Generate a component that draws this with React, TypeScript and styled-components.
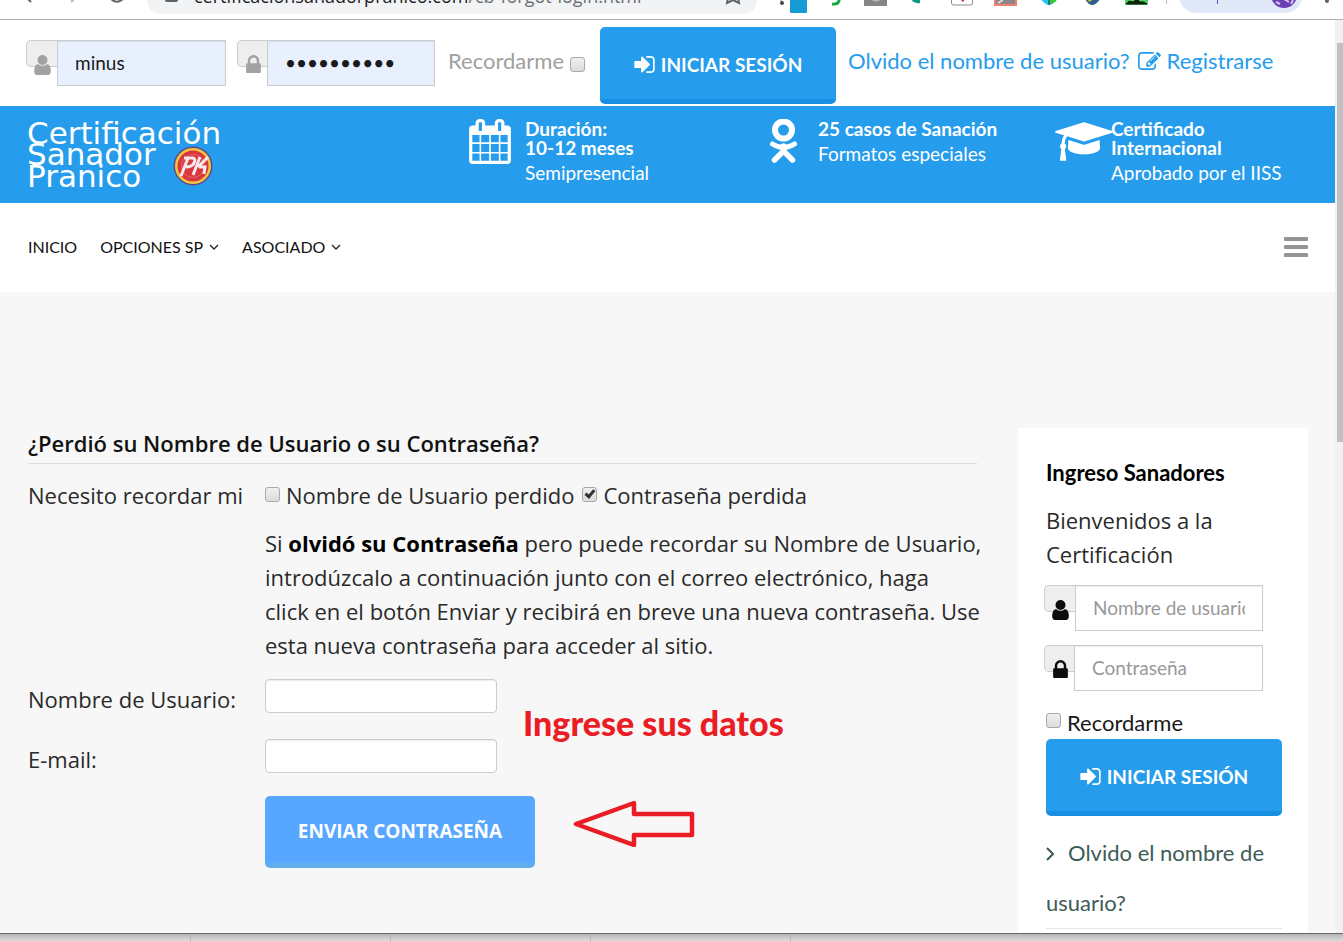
import React from 'react';
import styled, { createGlobalStyle, css } from 'styled-components';

const BLUE = '#259cec';
const LATO = `Lato, "Liberation Sans", sans-serif`;
const SANS = `"Open Sans", "Noto Sans", sans-serif`;

const GlobalStyle = createGlobalStyle`
  *, *::before, *::after { box-sizing: border-box; }
  body { margin: 0; background: #fff; font-family: ${LATO}; color: #1a1a1a; }
  a { text-decoration: none; }
  h1, h2, p { margin: 0; }
`;

const Window = styled.div`
  display: flex;
  flex-direction: column;
  height: 100vh;
  overflow: hidden;
`;

/* Browser toolbar */
const BrowserBar = styled.header`
  display: flex;
  align-items: flex-start;
  flex: none;
  height: 20px;
  border-bottom: 1px solid #b1b1b3;
  background: #fff;
  overflow: hidden;
`;
const NavGlyphs = styled.svg`
  flex: none;
  width: 147px;
  height: 19px;
`;
const AddressPill = styled.div`
  display: flex;
  align-items: flex-start;
  flex: 1;
  height: 14px;
  padding-left: 18px;
  padding-right: 16px;
  border-radius: 0 0 14px 14px;
  background: #f1f3f4;
`;
const Address = styled.span`
  flex: 1;
  height: 14px;
  margin-left: 16px;
  font: 18px/24px ${SANS};
  color: #6b6f73;
  white-space: nowrap;
  b { font-weight: 400; color: #202124; }
`;
const AddressText = styled.span`
  display: block;
  margin-top: -16px;
`;
const Extensions = styled.svg`
  flex: none;
  width: 586px;
  height: 19px;
`;

/* Page viewport and its scrollbar */
const Viewport = styled.div`
  display: flex;
  flex: 1;
  min-height: 0;
`;
const Page = styled.div`
  flex: 1;
  min-width: 0;
  overflow: hidden;
  background: #f7f7f7;
`;
const ScrollTrack = styled.div`
  flex: none;
  width: 8px;
  padding: 23px 0 0 2px;
  background: #f1f1f1;
`;
const ScrollThumb = styled.div`
  height: 399px;
  background: #c1c1c1;
`;
const Desktop = styled.footer`
  flex: none;
  height: 8px;
  border-top: 1px solid #686868;
  background:
    repeating-linear-gradient(90deg, transparent 0 190px, #b4b4b4 190px 191px, transparent 191px 200px) 0 0 / 800px 100% no-repeat,
    linear-gradient(#b4b4b4, #dcdcdc);
`;

/* Login controls shared by the top bar and the sidebar */
const Field = styled.div`
  display: flex;
  align-items: flex-start;
`;
const Addon = styled.label<{ $muted?: boolean; $narrow?: boolean }>`
  display: flex;
  justify-content: flex-end;
  flex: none;
  width: ${p => (p.$narrow ? 30 : 31)}px;
  height: 27px;
  padding: 14px 6px 0 0;
  border: 1px solid #ccc;
  border-right: 0;
  border-radius: 5px 0 0 5px;
  background: #eee;
  color: ${p => (p.$muted ? '#a2a2a2' : '#0d0d0d')};
  svg { flex: none; }
`;
const LoginInput = styled.input<{ $filled?: boolean; $width: number }>`
  width: ${p => p.$width}px;
  height: 46px;
  padding: 0 17px 2px;
  border: 1px solid #ccc;
  border-radius: 0;
  background: ${p => (p.$filled ? '#e8f0fe' : '#fff')};
  box-shadow: inset 0 1px 1px rgba(0, 0, 0, 0.08);
  font: 19px ${LATO};
  color: #1a1a1a;
  outline: none;
  &::placeholder { color: #999; opacity: 1; }
`;
const Check = styled.input.attrs({ type: 'checkbox' })`
  appearance: none;
  flex: none;
  width: 15px;
  height: 15px;
  margin: 0;
  border: 1px solid #a9a9a9;
  border-radius: 3px;
  background: linear-gradient(#efefef, #dcdcdc);
  &:checked::before {
    content: '';
    display: block;
    width: 6px;
    height: 10px;
    margin: 0 0 0 4px;
    border: solid #333;
    border-width: 0 3px 3px 0;
    transform: rotate(40deg);
  }
`;
const Button = styled.button<{ $light?: boolean }>`
  display: flex;
  align-items: center;
  justify-content: center;
  flex: none;
  gap: 6px;
  width: 236px;
  height: 77px;
  padding: 2px 0 0;
  border: 0;
  border-bottom: 5px solid #178fe3;
  border-radius: 5px;
  background: ${BLUE};
  color: #fff;
  font: 700 19px ${LATO};
  ${p => p.$light && css`
    width: 270px;
    height: 72px;
    border-bottom-color: #62aeea;
    background: #57a6ff;
    font: 700 19px ${SANS};
  `}
`;

const LoginBar = styled.form`
  display: flex;
  align-items: flex-start;
  height: 86px;
  padding: 7px 26px 0;
  background: #fff;
  ${Field} { margin: 13px 11px 0 0; }
`;
const RememberLabel = styled.label`
  display: flex;
  align-items: center;
  gap: 6px;
  margin: 0 15px 0 2px;
  font-size: 22px;
  line-height: 68px;
  color: #a0a0a0;
  ${Check} { margin-top: 6px; }
`;
const BarLink = styled.a`
  display: flex;
  align-items: center;
  gap: 6px;
  margin-left: 12px;
  font-size: 22px;
  line-height: 68px;
  color: ${BLUE};
  white-space: nowrap;
  & + & { margin-left: 8px; }
`;

/* Blue band */
const Band = styled.section`
  display: flex;
  justify-content: space-between;
  height: 97px;
  padding: 13px 0 0 28px;
  background: ${BLUE};
  color: #fff;
`;
const Brand = styled.a`
  display: block;
  color: #fff;
`;
const Features = styled.div`
  display: grid;
  grid-template-columns: 293px 293px 280px;
`;
const Feature = styled.div`
  display: flex;
`;
const FeatureIcon = styled.div`
  flex: none;
  width: 56px;
`;
const FeatureText = styled.div`
  font-size: 19px;
  line-height: 31px;
  white-space: nowrap;
  strong { display: block; line-height: 19px; }
`;

const Menu = styled.nav`
  display: flex;
  align-items: center;
  gap: 23px;
  height: 89px;
  padding: 0 27px 2px 28px;
  background: #fff;
`;
const MenuLink = styled.a`
  display: flex;
  align-items: center;
  gap: 6px;
  font-size: 16px;
  color: #111;
`;
const MenuToggle = styled.button`
  display: flex;
  margin-left: auto;
  padding: 0;
  border: 0;
  background: none;
`;

/* Body */
const Columns = styled.div`
  display: flex;
  align-items: flex-start;
  gap: 41px;
  padding: 136px 27px 0 28px;
`;
const Main = styled.main`
  flex: 1;
  min-width: 0;
  font: 22px/34px ${SANS};
  color: #2a2a2a;
`;
const Title = styled.h1`
  height: 36px;
  border-bottom: 1px solid #ddd;
  font: 600 22px/30px ${SANS};
  color: #111;
`;
const RecoverForm = styled.form`
  position: relative;
  display: grid;
  grid-template-columns: 237px 1fr;
  padding-top: 14px;
`;
const Choices = styled.div`
  display: flex;
  gap: 8px;
`;
const Choice = styled.label`
  display: flex;
  align-items: center;
  gap: 6px;
  white-space: nowrap;
  ${Check} { margin-top: -1px; }
`;
const Help = styled.p`
  grid-column: 2;
  margin: 14px 0 17px;
  white-space: nowrap;
  b { font-weight: 700; color: #000; }
`;
const RowLabel = styled.label`
  height: 60px;
  padding-top: 3px;
`;
const TextBox = styled.input`
  width: 232px;
  height: 34px;
  padding: 0 8px;
  border: 1px solid #ccc;
  border-radius: 4px;
  background: #fff;
  box-shadow: inset 0 1px 1px rgba(0, 0, 0, 0.08);
  font: 18px ${SANS};
`;
const Submit = styled.div`
  grid-column: 2;
  margin-top: -3px;
`;
const Note = styled.strong`
  position: absolute;
  left: 495px;
  top: 239px;
  font: 900 34px/40px ${LATO};
  color: #ea1c24;
  white-space: nowrap;
`;
const Arrow = styled.svg`
  position: absolute;
  left: 544px;
  top: 335px;
`;

const Card = styled.aside`
  flex: none;
  width: 290px;
  height: 640px;
  padding: 28px 26px 0;
  background: #fff;
  ${Field} { margin-bottom: 14px; }
`;
const CardTitle = styled.h2`
  padding-left: 2px;
  font: 700 22px/34px ${LATO};
  color: #000;
`;
const Welcome = styled.p`
  margin: 13px 0 14px;
  padding-left: 2px;
  font: 22px/34px ${SANS};
  color: #2a2a2a;
`;
const CardRemember = styled.label`
  display: flex;
  align-items: center;
  gap: 6px;
  padding: 2px 0 0 2px;
  font-size: 22px;
  line-height: 32px;
  ${Check} { margin-top: -5px; }
`;
const CardActions = styled.div`
  padding-left: 2px;
`;
const CardLink = styled.a`
  display: block;
  margin-top: 12px;
  border-bottom: 1px solid #e5e5e5;
  font-size: 22px;
  line-height: 50px;
  color: #3d5c55;
  svg { margin-right: 14px; }
`;

const paths = {
  user: 'M1536 1399q0 109-62.5 187t-150.5 78h-854q-88 0-150.5-78t-62.5-187q0-85 8.5-160.5t31.5-152 58.5-131 94-89 134.5-34.5q131 128 313 128t313-128q76 0 134.5 34.5t94 89 58.5 131 31.5 152 8.5 160.5zm-256-887q0 159-112.5 271.5t-271.5 112.5-271.5-112.5-112.5-271.5 112.5-271.5 271.5-112.5 271.5 112.5 112.5 271.5z',
  lock: 'M640 768h512v-192q0-106-75-181t-181-75-181 75-75 181v192zm832 96v576q0 40-28 68t-68 28h-960q-40 0-68-28t-28-68v-576q0-40 28-68t68-28h32v-192q0-184 132-316t316-132 316 132 132 316v192h32q40 0 68 28t28 68z',
  signIn: 'M1312 896q0 26-19 45l-544 544q-19 19-45 19t-45-19-19-45v-288h-448q-26 0-45-19t-19-45v-384q0-26 19-45t45-19h448v-288q0-26 19-45t45-19 45 19l544 544q19 19 19 45zm352-352v704q0 119-84.5 203.5t-203.5 84.5h-320q-13 0-22.5-9.5t-9.5-22.5q0-4-1-20t-.5-26.5 3-23.5 10-19.5 20.5-6.5h320q66 0 113-47t47-113v-704q0-66-47-113t-113-47h-312l-11.5-1-11.5-3-8-5.5-7-9-2-13.5q0-4-1-20t-.5-26.5 3-23.5 10-19.5 20.5-6.5h320q119 0 203.5 84.5t84.5 203.5z',
  edit: 'M888 1184l116-116-152-152-116 116v56h96v96h56zm440-720q-16-16-33 1l-350 350q-17 17-1 33t33-1l350-350q17-17 1-33zm80 594v190q0 119-84.5 203.5t-203.5 84.5h-832q-119 0-203.5-84.5t-84.5-203.5v-832q0-119 84.5-203.5t203.5-84.5h832q63 0 117 25 15 7 18 23 3 17-9 29l-49 49q-14 14-32 8-23-6-45-6h-832q-66 0-113 47t-47 113v832q0 66 47 113t113 47h832q66 0 113-47t47-113v-126q0-13 9-22l64-64q15-15 35-7t20 29zm-96-738l288 288-672 672h-288v-288zm444 132l-92 92-288-288 92-92q28-28 68-28t68 28l152 152q28 28 28 68t-28 68z',
  calendar: 'M192 1664h288v-288h-288v288zm352 0h320v-288h-320v288zm-352-352h288v-320h-288v320zm352 0h320v-320h-320v320zm-352-384h288v-288h-288v288zm736 736h320v-288h-320v288zm-384-736h320v-288h-320v288zm768 736h288v-288h-288v288zm-384-352h320v-320h-320v320zm-352-864v-288q0-13-9.5-22.5t-22.5-9.5h-64q-13 0-22.5 9.5t-9.5 22.5v288q0 13 9.5 22.5t22.5 9.5h64q13 0 22.5-9.5t9.5-22.5zm736 864h288v-320h-288v320zm-384-384h320v-288h-320v288zm384 0h288v-288h-288v288zm32-480v-288q0-13-9.5-22.5t-22.5-9.5h-64q-13 0-22.5 9.5t-9.5 22.5v288q0 13 9.5 22.5t22.5 9.5h64q13 0 22.5-9.5t9.5-22.5zm384-64v1280q0 52-38 90t-90 38h-1408q-52 0-90-38t-38-90v-1280q0-52 38-90t90-38h128v-96q0-66 47-113t113-47h64q66 0 113 47t47 113v96h384v-96q0-66 47-113t113-47h64q66 0 113 47t47 113v96h128q52 0 90 38t38 90z',
  graduation: 'M1774 836l18 316q4 69-82 128t-235 93.5-323 34.5-323-34.5-235-93.5-82-128l18-316 574 181q22 7 48 7t48-7zm530-324q0 23-22 31l-1120 352q-4 1-10 1t-10-1l-652-206q-43 34-71 111.5t-34 178.5q63 36 63 109 0 69-58 107l58 433q2 14-8 25-9 11-24 11h-192q-15 0-24-11-10-11-8-25l58-433q-58-38-58-107 0-73 65-111 11-207 98-330l-333-104q-22-8-22-31t22-31l1120-352q4-1 10-1t10 1l1120 352q22 8 22 31z',
};

const Icon = ({ d, box, width, height }: { d: string; box: string; width: number; height: number }) => (
  <svg viewBox={box} width={width} height={height} fill="currentColor" aria-hidden="true">
    <path d={d} />
  </svg>
);
const UserIcon = () => <Icon d={paths.user} box="256 128 1280 1536" width={17} height={20} />;
const LockIcon = () => <Icon d={paths.lock} box="320 128 1152 1408" width={15} height={18} />;
const SignInIcon = () => <Icon d={paths.signIn} box="128 256 1536 1280" width={21} height={17} />;
const Chevron = () => (
  <svg width="10" height="8" viewBox="0 0 10 8" fill="none" stroke="#222" strokeWidth="1.3" aria-hidden="true">
    <path d="M1 2l4 4 4-4" />
  </svg>
);

const Logo = () => (
  <svg width="204" height="72" viewBox="0 0 204 72" aria-label="Certificación Sanador Pranico">
    <g fill="#fff" fontFamily="'DejaVu Sans', sans-serif" fontSize="31" fontWeight="400">
      <text x="-1" y="25">Certificación</text>
      <text x="-1" y="46">Sanador</text>
      <text x="-1" y="68">Pranico</text>
    </g>
    <circle cx="165" cy="47" r="19.5" fill="#5d4a8e" />
    <circle cx="165" cy="47" r="18" fill="#f2c53d" />
    <circle cx="165" cy="47" r="15.5" fill="#d9363e" />
    <circle cx="165" cy="47" r="11.5" fill="none" stroke="#e4686c" strokeWidth="1" />
    <g fill="none" stroke="#f7e9ec" strokeWidth="3">
      <path d="M153 57l7-18M156 39h9q3 1 1 5t-8 4" />
      <path d="M165 56l7-18M180 38l-10 10M171 48h6l-1 7" />
    </g>
  </svg>
);

const App = () => (
  <>
    <GlobalStyle />
    <Window>
      <BrowserBar>
        <NavGlyphs viewBox="0 0 147 19" fill="none" stroke="#5f6368" strokeWidth="2" aria-hidden="true">
          <path d="M25-4l6 6" />
          <path d="M77-4l-6 6" stroke="#b8babd" />
          <path d="M111-1q6 6 13-1" />
        </NavGlyphs>
        <AddressPill>
          <svg width="13" height="3" viewBox="0 0 13 3" aria-hidden="true">
            <path d="M0-4h13v4q0 2-2 2H2q-2 0-2-2z" fill="#5f6368" />
          </svg>
          <Address>
            <AddressText><b>certificacionsanadorpranico.com</b>/cb-forgot-login.html</AddressText>
          </Address>
          <svg width="16" height="5" viewBox="0 0 16 5" fill="none" stroke="#5f6368" strokeWidth="2" aria-hidden="true">
            <path d="M3-3L2 3l6-3 6 3-1-6" />
          </svg>
        </AddressPill>
        <Extensions viewBox="757 0 586 19" aria-hidden="true">
          <path d="M780-1l2 3" stroke="#6a7a70" strokeWidth="1" />
          <circle cx="782" cy="3" r="2" fill="#3b4a45" />
          <rect x="790" y="-6" width="17" height="19" rx="1" fill="#179bd7" />
          <path d="M832 4q8 1 7-6" fill="none" stroke="#18a83b" strokeWidth="3" />
          <path d="M864-2h23v8h-23z" fill="#868686" />
          <path d="M872-1q4 3 8 0" fill="none" stroke="#b5b5b5" strokeWidth="2" />
          <path d="M911-1q3 5 9 4v-4z" fill="#0f9a86" />
          <rect x="951.5" y="-8" width="21" height="13" rx="2" fill="#fff" stroke="#8b8b8b" />
          <path d="M960-1h5l-2 3z" fill="#c8283c" />
          <path d="M994-2h23v8h-23z" fill="#f0806c" />
          <path d="M996-2h19v6h-19z" fill="#8d8588" />
          <path d="M998 3l5-3" stroke="#ddd" strokeWidth="2" />
          <path d="M1041-1q8 12 16 0z" fill="#20c8f0" />
          <path d="M1049-1v5q7-1 8-5z" fill="#32c832" />
          <path d="M1049-1v6" stroke="#1b2a6a" strokeWidth="1" />
          <path d="M1085-1q7 12 15 0z" fill="#2f5d87" />
          <path d="M1086-1l4 3 3-3z" fill="#c9c63a" />
          <path d="M1125-2h23v7h-23z" fill="#4fd25c" />
          <path d="M1126 4l3-3 4 1 4-3 3 3 4 0 3 2z" fill="#10200f" stroke="#10200f" />
          <path d="M1166.500 0v4" stroke="#bbb" />
          <path d="M1179-1h123q-4 14-18 14h-86q-15 0-19-14z" fill="#e1e9f8" />
          <path d="M1217.500 0v4" stroke="#3f62c0" strokeWidth="1" />
          <circle cx="1284" cy="-5" r="13" fill="#6b3fb5" />
          <path d="M1276 2l4 2M1284-1l5 3M1291 4l2-4" stroke="#d7bff0" strokeWidth="2" />
          <circle cx="1327" cy="1" r="2" fill="#5f6368" />
        </Extensions>
      </BrowserBar>

      <Viewport>
        <Page>
          <LoginBar onSubmit={e => e.preventDefault()}>
            <Field>
              <Addon htmlFor="top-user" aria-label="Nombre de usuario" $muted><UserIcon /></Addon>
              <LoginInput id="top-user" $width={169} $filled defaultValue="minus" />
            </Field>
            <Field>
              <Addon htmlFor="top-pass" aria-label="Contraseña" $muted $narrow><LockIcon /></Addon>
              <LoginInput id="top-pass" type="password" $width={168} $filled defaultValue="0123456789" />
            </Field>
            <RememberLabel>Recordarme<Check /></RememberLabel>
            <Button type="submit"><SignInIcon />INICIAR SESIÓN</Button>
            <BarLink href="#olvido">Olvido el nombre de usuario?</BarLink>
            <BarLink href="#registro">
              <Icon d={paths.edit} box="0 128 1792 1408" width={23} height={18} />
              Registrarse
            </BarLink>
          </LoginBar>

          <Band>
            <Brand href="#inicio"><Logo /></Brand>
            <Features>
              <Feature>
                <FeatureIcon><Icon d={paths.calendar} box="64 0 1664 1792" width={42} height={45} /></FeatureIcon>
                <FeatureText><strong>Duración:</strong><strong>10-12 meses</strong>Semipresencial</FeatureText>
              </Feature>
              <Feature>
                <FeatureIcon>
                  <svg width="42" height="45" viewBox="0 0 42 45" fill="none" stroke="#fff" aria-hidden="true">
                    <circle cx="21.500" cy="11" r="8.500" strokeWidth="6" />
                    <path d="M10.500 25q11 7 22 0" strokeWidth="5" strokeLinecap="round" />
                    <path d="M12.500 41l9-9 9 9M21.500 27v5" strokeWidth="5.500" strokeLinecap="round" />
                  </svg>
                </FeatureIcon>
                <FeatureText><strong>25 casos de Sanación</strong>Formatos especiales</FeatureText>
              </Feature>
              <Feature>
                <FeatureIcon><Icon d={paths.graduation} box="0 0 2304 1792" width={58} height={45} /></FeatureIcon>
                <FeatureText><strong>Certificado</strong><strong>Internacional</strong>Aprobado por el IISS</FeatureText>
              </Feature>
            </Features>
          </Band>

          <Menu>
            <MenuLink href="#inicio">INICIO</MenuLink>
            <MenuLink href="#opciones">OPCIONES SP<Chevron /></MenuLink>
            <MenuLink href="#asociado">ASOCIADO<Chevron /></MenuLink>
            <MenuToggle type="button" aria-label="Menú">
              <svg width="24" height="20" viewBox="0 0 24 20" fill="#949494" aria-hidden="true">
                <rect width="24" height="4" rx="1" />
                <rect y="8" width="24" height="4" rx="1" />
                <rect y="16" width="24" height="4" rx="1" />
              </svg>
            </MenuToggle>
          </Menu>

          <Columns>
            <Main>
              <Title>¿Perdió su Nombre de Usuario o su Contraseña?</Title>
              <RecoverForm onSubmit={e => e.preventDefault()}>
                <span>Necesito recordar mi</span>
                <Choices>
                  <Choice><Check />Nombre de Usuario perdido</Choice>
                  <Choice><Check defaultChecked />Contraseña perdida</Choice>
                </Choices>
                <Help>
                  Si <b>olvidó su Contraseña</b> pero puede recordar su Nombre de Usuario,<br />
                  introdúzcalo a continuación junto con el correo electrónico, haga<br />
                  click en el botón Enviar y recibirá en breve una nueva contraseña. Use<br />
                  esta nueva contraseña para acceder al sitio.
                </Help>
                <RowLabel htmlFor="username">Nombre de Usuario:</RowLabel>
                <TextBox id="username" />
                <RowLabel htmlFor="email">E-mail:</RowLabel>
                <TextBox id="email" type="email" />
                <Submit><Button type="submit" $light>ENVIAR CONTRASEÑA</Button></Submit>
                <Note>Ingrese sus datos</Note>
                <Arrow width="124" height="48" viewBox="0 0 124 48" fill="none" stroke="#ea1c24" strokeWidth="4.500" strokeLinejoin="round" aria-hidden="true">
                  <path d="M4 25L62 4v11h58v21H62v10z" />
                </Arrow>
              </RecoverForm>
            </Main>

            <Card>
              <CardTitle>Ingreso Sanadores</CardTitle>
              <Welcome>Bienvenidos a la Certificación</Welcome>
              <Field>
                <Addon htmlFor="side-user" aria-label="Nombre de usuario"><UserIcon /></Addon>
                <LoginInput id="side-user" $width={188} placeholder="Nombre de usuario" />
              </Field>
              <Field>
                <Addon htmlFor="side-pass" aria-label="Contraseña" $narrow><LockIcon /></Addon>
                <LoginInput id="side-pass" type="password" $width={189} placeholder="Contraseña" />
              </Field>
              <CardRemember><Check />Recordarme</CardRemember>
              <CardActions>
                <Button type="button"><SignInIcon />INICIAR SESIÓN</Button>
                <CardLink href="#olvido">
                  <svg width="8" height="14" viewBox="0 0 8 14" fill="none" stroke="currentColor" strokeWidth="2" aria-hidden="true">
                    <path d="M1 1l6 6-6 6" />
                  </svg>
                  Olvido el nombre de usuario?
                </CardLink>
              </CardActions>
            </Card>
          </Columns>
        </Page>
        <ScrollTrack><ScrollThumb /></ScrollTrack>
      </Viewport>
      <Desktop />
    </Window>
  </>
);

export default App;
